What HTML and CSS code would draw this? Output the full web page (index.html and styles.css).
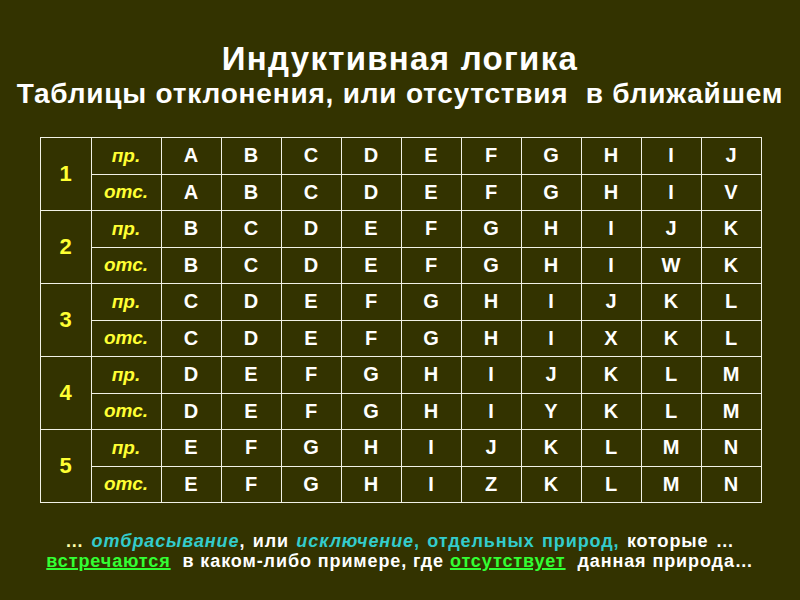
FILE: index.html
```html
<!DOCTYPE html>
<html lang="ru">
<head>
<meta charset="utf-8">
<title>Индуктивная логика</title>
<link rel="stylesheet" href="styles.css">
</head>
<body>
<div class="slide">
  <header class="title">
    <div class="t1">Индуктивная логика</div>
    <div class="t2">Таблицы отклонения, или отсутствия&nbsp; в ближайшем</div>
  </header>
  <table class="grid">
    <colgroup>
      <col class="c-num"><col class="c-lab">
      <col class="c-l"><col class="c-l"><col class="c-l"><col class="c-l"><col class="c-l">
      <col class="c-l"><col class="c-l"><col class="c-l"><col class="c-l"><col class="c-l">
    </colgroup>
    <tbody>
      <tr><td class="num" rowspan="2">1</td><td class="lab">пр.</td><td>A</td><td>B</td><td>C</td><td>D</td><td>E</td><td>F</td><td>G</td><td>H</td><td>I</td><td>J</td></tr>
      <tr><td class="lab">отс.</td><td>A</td><td>B</td><td>C</td><td>D</td><td>E</td><td>F</td><td>G</td><td>H</td><td>I</td><td>V</td></tr>
      <tr><td class="num" rowspan="2">2</td><td class="lab">пр.</td><td>B</td><td>C</td><td>D</td><td>E</td><td>F</td><td>G</td><td>H</td><td>I</td><td>J</td><td>K</td></tr>
      <tr><td class="lab">отс.</td><td>B</td><td>C</td><td>D</td><td>E</td><td>F</td><td>G</td><td>H</td><td>I</td><td>W</td><td>K</td></tr>
      <tr><td class="num" rowspan="2">3</td><td class="lab">пр.</td><td>C</td><td>D</td><td>E</td><td>F</td><td>G</td><td>H</td><td>I</td><td>J</td><td>K</td><td>L</td></tr>
      <tr><td class="lab">отс.</td><td>C</td><td>D</td><td>E</td><td>F</td><td>G</td><td>H</td><td>I</td><td>X</td><td>K</td><td>L</td></tr>
      <tr><td class="num" rowspan="2">4</td><td class="lab">пр.</td><td>D</td><td>E</td><td>F</td><td>G</td><td>H</td><td>I</td><td>J</td><td>K</td><td>L</td><td>M</td></tr>
      <tr><td class="lab">отс.</td><td>D</td><td>E</td><td>F</td><td>G</td><td>H</td><td>I</td><td>Y</td><td>K</td><td>L</td><td>M</td></tr>
      <tr><td class="num" rowspan="2">5</td><td class="lab">пр.</td><td>E</td><td>F</td><td>G</td><td>H</td><td>I</td><td>J</td><td>K</td><td>L</td><td>M</td><td>N</td></tr>
      <tr><td class="lab">отс.</td><td>E</td><td>F</td><td>G</td><td>H</td><td>I</td><td>Z</td><td>K</td><td>L</td><td>M</td><td>N</td></tr>
    </tbody>
  </table>
  <footer class="note">
    <div class="line first"><span class="dots">…</span> <em class="cy">отбрасывание</em>, или <em class="cy">исключение</em><span class="cy">, отдельных природ,</span> которые …</div>
    <div class="line"><u class="gr">встречаются</u>&nbsp; в каком-либо примере, где <u class="gr">отсутствует</u>&nbsp; данная природа…</div>
  </footer>
</div>
</body>
</html>
```

FILE: styles.css
```css
html, body {
  margin: 0;
  padding: 0;
  background: #333300;
}
.slide {
  width: 800px;
  height: 600px;
  background: #333300;
  font-family: "Liberation Sans", Arial, sans-serif;
  font-weight: bold;
  color: #ffffff;
  display: flex;
  flex-direction: column;
  align-items: center;
  overflow: hidden;
}
.title {
  padding-top: 41px;
  text-align: center;
}
.t1 {
  font-size: 33px;
  line-height: 36px;
  letter-spacing: 1.3px;
}
.t2 {
  font-size: 28px;
  line-height: 34px;
  letter-spacing: 0.8px;
}
.grid {
  margin-top: 26px;
  border-collapse: collapse;
  table-layout: fixed;
  width: 721px;
  height: 366px;
  margin-left: 1px;
}
.grid td {
  border: 1px solid #f2f2e6;
  text-align: center;
  vertical-align: middle;
  padding: 0;
  font-size: 20px;
  color: #ffffff;
}
.c-num { width: 51px; }
.c-lab { width: 70px; }
.c-l { width: 60px; }
.grid td.num {
  color: #ffff33;
  font-size: 22px;
}
.grid td.lab {
  color: #ffff33;
  font-style: italic;
  font-size: 19px;
}
.note {
  margin-top: 28px;
  text-align: center;
  font-size: 18px;
  line-height: 20px;
  letter-spacing: 0.9px;
}
.line.first {
  word-spacing: 1.5px;
}
.dots { color: #ffffaa; }
.cy { color: #33cccc; }
em.cy { font-style: italic; }
.gr {
  color: #33ff33;
  text-decoration: underline;
  text-decoration-thickness: 2px;
}
```
